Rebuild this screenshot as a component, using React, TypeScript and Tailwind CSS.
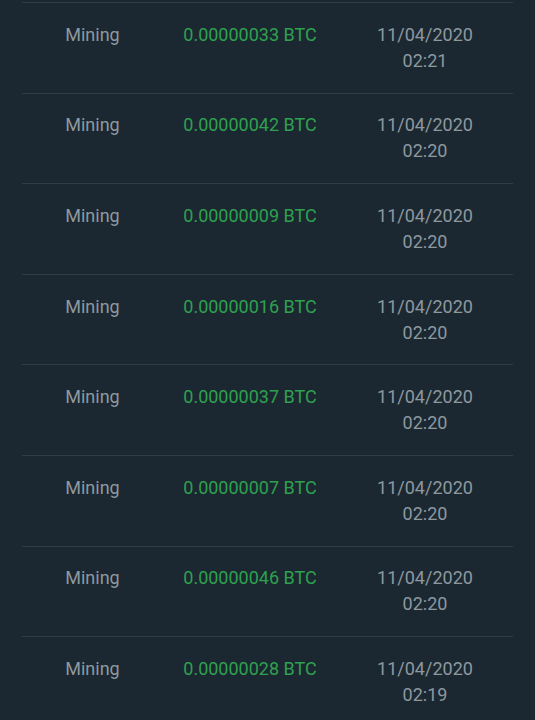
const rows = [
  { amount: "0.00000033", time: "02:21" },
  { amount: "0.00000042", time: "02:20" },
  { amount: "0.00000009", time: "02:20" },
  { amount: "0.00000016", time: "02:20" },
  { amount: "0.00000037", time: "02:20" },
  { amount: "0.00000007", time: "02:20" },
  { amount: "0.00000046", time: "02:20" },
  { amount: "0.00000028", time: "02:19" },
];

const App = () => {
  return (
    <div
      className="min-h-[720px] w-[535px] overflow-hidden bg-[#1c2831] pt-[2px]"
      style={{ fontFamily: "Roboto, 'Liberation Sans', sans-serif" }}
    >
      <ul className="mx-[22px] w-[491px]">
        {rows.map((row, i) => (
          <li
            key={i}
            className="grid grid-cols-[141px_174px_176px] border-t border-[#2f3c45] py-[18.8px] text-center text-[18px] leading-[26px]"
          >
            <span className="text-[#8d989f]">Mining</span>
            <span className="text-[#2ea14f]">{row.amount} BTC</span>
            <span className="text-[#8d989f]">
              11/04/2020
              <br />
              {row.time}
            </span>
          </li>
        ))}
      </ul>
    </div>
  );
};

export default App;
